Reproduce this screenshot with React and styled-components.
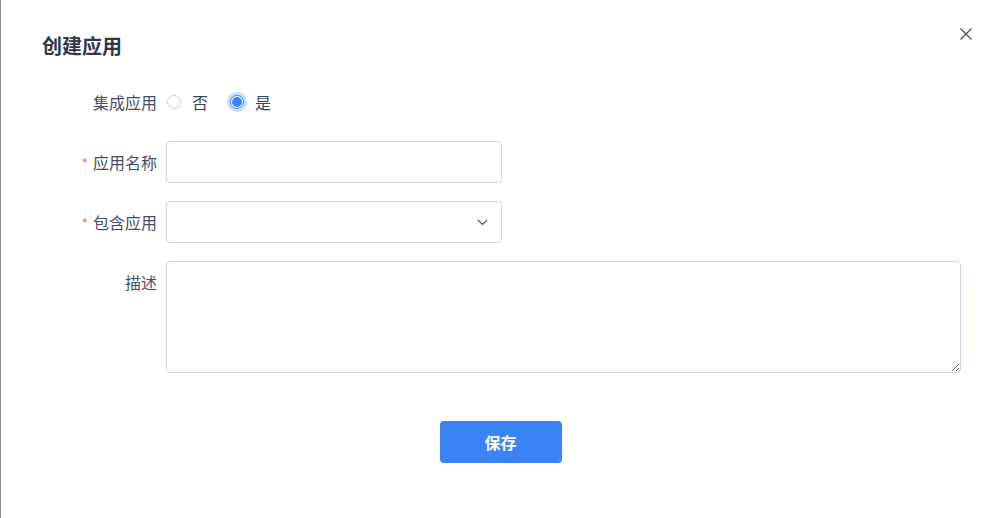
import React from 'react';
import styled, { createGlobalStyle } from 'styled-components';

const GlobalStyle = createGlobalStyle`
  html, body {
    margin: 0;
    padding: 0;
    background: #ffffff;
  }
  body {
    font-family: "Noto Sans CJK SC", "Noto Sans", sans-serif;
  }
  * {
    box-sizing: border-box;
  }
`;

const Dialog = styled.div`
  width: 1000px;
  height: 518px;
  background: #fff;
  border-left: 1px solid #8c8c8c;
  display: flex;
  flex-direction: column;
`;

const Header = styled.div`
  display: flex;
  justify-content: space-between;
  align-items: flex-start;
  padding: 0 28px 0 41px;
`;

const Title = styled.h2`
  margin: 30px 0 0;
  font-size: 20px;
  line-height: 32px;
  font-weight: 700;
  color: #2f3749;
`;

const CloseButton = styled.button`
  margin-top: 28px;
  width: 12px;
  height: 12px;
  padding: 0;
  border: none;
  background: none;
  cursor: pointer;
  display: flex;
  svg {
    display: block;
  }
`;

const Form = styled.form`
  margin-top: 19px;
  display: flex;
  flex-direction: column;
  gap: 18px;
`;

const Row = styled.div`
  display: flex;
  align-items: flex-start;
  gap: 9px;
`;

const Label = styled.label`
  width: 156px;
  height: 42px;
  flex-shrink: 0;
  text-align: right;
  font-size: 16px;
  line-height: 42px;
  color: #454d64;
  white-space: nowrap;
`;

const Star = styled.span`
  color: #f37373;
  margin-right: 5px;
  font-size: 14px;
  line-height: 1;
`;

const RadioGroup = styled.div`
  display: flex;
  align-items: center;
  height: 42px;
  gap: 21px;
`;

const RadioOption = styled.label`
  display: flex;
  align-items: center;
  gap: 11px;
  font-size: 16px;
  color: #3a4256;
  cursor: pointer;
`;

const RadioDot = styled.span`
  width: 14px;
  height: 14px;
  margin-left: 1px;
  border-radius: 50%;
  border: 1px solid ${(p) => (p.checked ? '#3b82f6' : '#c8ccd6')};
  background: #fff;
  display: flex;
  align-items: center;
  justify-content: center;
  box-shadow: ${(p) => (p.checked ? '0 0 0 3px rgba(59,130,246,0.28)' : 'none')};
  &::after {
    content: '';
    width: 10px;
    height: 10px;
    border-radius: 50%;
    background: ${(p) => (p.checked ? '#3b82f6' : 'transparent')};
  }
`;

const Input = styled.input`
  width: 336px;
  height: 42px;
  border: 1px solid #d4d7e3;
  border-radius: 4px;
  padding: 0 12px;
  font-size: 15px;
  font-family: inherit;
  outline: none;
`;

const SelectBox = styled.div`
  width: 336px;
  height: 42px;
  border: 1px solid #d4d7e3;
  border-radius: 4px;
  display: flex;
  align-items: center;
  justify-content: flex-end;
  padding-right: 13px;
`;

const TextArea = styled.textarea`
  display: block;
  width: 795px;
  height: 112px;
  border: 1px solid #d4d7e3;
  border-radius: 4px;
  padding: 8px 12px;
  font-size: 15px;
  font-family: inherit;
  resize: both;
  outline: none;
`;

const Footer = styled.div`
  display: flex;
  justify-content: center;
  margin-top: 48px;
`;

const SaveButton = styled.button`
  width: 122px;
  height: 42px;
  border: none;
  border-radius: 4px;
  background: #3b84f8;
  color: #fff;
  font-size: 16px;
  font-weight: 700;
  font-family: inherit;
  cursor: pointer;
`;

const Radio = ({ checked, children }) => (
  <RadioOption>
    <RadioDot checked={checked} />
    {children}
  </RadioOption>
);

export default function App() {
  return (
    <>
      <GlobalStyle />
      <Dialog>
        <Header>
          <Title>创建应用</Title>
          <CloseButton type="button" aria-label="close">
            <svg width="12" height="12" viewBox="0 0 12 12">
              <path d="M0.5 0.5L11.5 11.5M11.5 0.5L0.5 11.5" stroke="#4a4f5e" strokeWidth="1.3" />
            </svg>
          </CloseButton>
        </Header>
        <Form onSubmit={(e) => e.preventDefault()}>
          <Row>
            <Label>集成应用</Label>
            <RadioGroup>
              <Radio>否</Radio>
              <Radio checked>是</Radio>
            </RadioGroup>
          </Row>
          <Row>
            <Label>
              <Star>*</Star>应用名称
            </Label>
            <Input />
          </Row>
          <Row>
            <Label>
              <Star>*</Star>包含应用
            </Label>
            <SelectBox>
              <svg width="11" height="7" viewBox="0 0 11 7">
                <path d="M0.8 0.8L5.5 5.5L10.2 0.8" fill="none" stroke="#4a4f5e" strokeWidth="1.2" />
              </svg>
            </SelectBox>
          </Row>
          <Row>
            <Label>描述</Label>
            <TextArea />
          </Row>
        </Form>
        <Footer>
          <SaveButton type="button">保存</SaveButton>
        </Footer>
      </Dialog>
    </>
  );
}
